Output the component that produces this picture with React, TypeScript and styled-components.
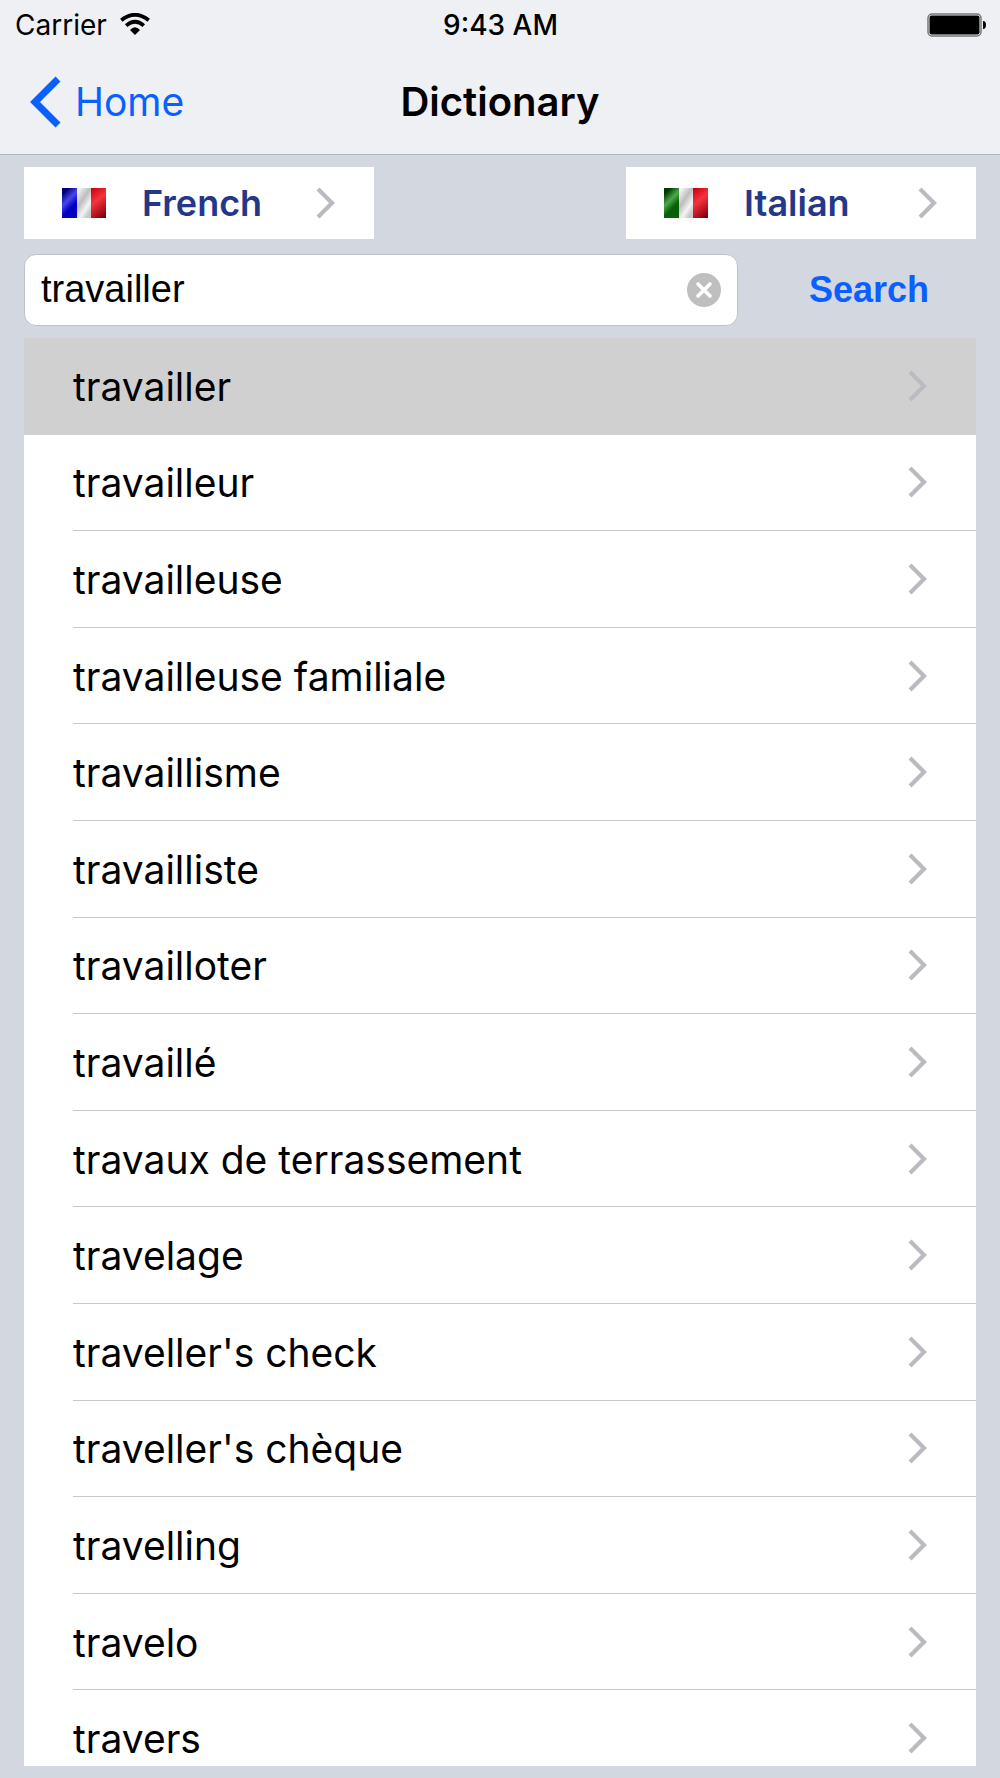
import React, { useState } from "react";
import styled, { createGlobalStyle } from "styled-components";

const GlobalStyle = createGlobalStyle`
  *, *::before, *::after { box-sizing: border-box; }
  body { margin: 0; background: #d2d7e0; }
  button, input { font: inherit; color: inherit; margin: 0; padding: 0; border: 0; background: none; }
  button { cursor: pointer; }
`;

const Screen = styled.div`
  display: flex;
  flex-direction: column;
  height: 100vh;
  padding-bottom: 12px;
  background: #d2d7e0;
  color: #000;
  font-family: Inter, "Liberation Sans", sans-serif;
`;

const Header = styled.header`
  flex: none;
  background: #eff0f4;
  border-bottom: 1px solid #b0b4ba;
`;

const StatusBar = styled.div`
  display: grid;
  grid-template-columns: 1fr auto 1fr;
  align-items: center;
  height: 50px;
  padding: 0 14px 0 15px;
  font-size: 28px;
  line-height: 50px;
`;

const Carrier = styled.span`
  display: flex;
  align-items: center;
  gap: 13px;
`;

const Clock = styled.time`
  font-weight: 500;
`;

const Battery = styled.svg`
  justify-self: end;
`;

const NavBar = styled.nav`
  display: grid;
  grid-template-columns: 1fr auto 1fr;
  align-items: center;
  height: 104px;
  padding: 0 30px;
`;

const BackLink = styled.a`
  display: flex;
  align-items: center;
  gap: 14px;
  color: #0a60ff;
  font-size: 39px;
  line-height: 52px;
  text-decoration: none;
`;

const Title = styled.h1`
  margin: 0;
  font-size: 40px;
  line-height: 52px;
  font-weight: 600;
`;

const Languages = styled.div`
  display: flex;
  justify-content: space-between;
  flex: none;
  padding: 12px 24px 0;
`;

const LanguageButton = styled.button`
  display: grid;
  grid-template-columns: 44px 1fr 20px;
  align-items: center;
  column-gap: 36px;
  width: 35vw;
  height: 72px;
  padding: 0 38px;
  background: #fff;
  color: #253788;
  font-size: 36px;
  font-weight: 600;
  text-align: left;
`;

const SearchForm = styled.form`
  display: grid;
  grid-template-columns: 3fr 1fr;
  flex: none;
  padding: 15px 24px 12px;
  font-family: "Liberation Sans", Arial, sans-serif;
`;

const SearchField = styled.div`
  display: flex;
  align-items: center;
  height: 72px;
  padding: 0 16px;
  background: #fff;
  border: 1px solid #bfc2c8;
  border-radius: 12px;
`;

const SearchInput = styled.input`
  flex: 1;
  min-width: 0;
  padding-bottom: 3px;
  font-size: 38px;
  line-height: 44px;
  outline: none;
`;

const ClearButton = styled.button`
  display: flex;
`;

const SubmitButton = styled.button`
  padding-left: 24px;
  color: #0a60ff;
  font-size: 36px;
  font-weight: 700;
`;

const Results = styled.main`
  flex: 1;
  min-height: 0;
  margin: 0 24px;
  overflow-y: auto;
  scrollbar-width: none;
  background: #fff;
`;

const WordList = styled.ul`
  display: grid;
  grid-auto-rows: 1fr;
  min-height: 1449px;
  margin: 0;
  padding: 0;
  list-style: none;
`;

const WordItem = styled.li<{ $selected: boolean }>`
  display: flex;
  padding-left: 49px;
  background: ${(p) => (p.$selected ? "#d0d0d0" : "#fff")};
`;

const WordButton = styled.button<{ $selected: boolean }>`
  display: flex;
  flex: 1;
  align-items: center;
  justify-content: space-between;
  padding-right: 48px;
  border-bottom: 1px solid ${(p) => (p.$selected ? "#d0d0d0" : "#c8c7cc")};
  font-size: 39px;
  text-align: left;
`;

const WordText = styled.span`
  padding-top: 2px;
  line-height: 52px;
`;

const Chevron = () => (
  <svg width="20" height="32" viewBox="0 0 20 32" fill="none" aria-hidden="true">
    <path d="M2 2 L16 16 L2 30" stroke="#bbbac1" strokeWidth="4.200" />
  </svg>
);

const BackChevron = () => (
  <svg width="31" height="52" viewBox="0 0 31 52" fill="none" aria-hidden="true">
    <path d="M28 3 L5 26 L28 49" stroke="#0a60ff" strokeWidth="7" />
  </svg>
);

const WifiIcon = () => (
  <svg width="30" height="24" viewBox="0 0 30 24" fill="none" aria-hidden="true">
    <path d="M1.300 7.300 Q15 -3.800 28.700 7.300" stroke="#000" strokeWidth="3.800" />
    <path d="M6.200 12.600 Q15 4.800 23.800 12.600" stroke="#000" strokeWidth="3.800" />
    <path d="M10 17 Q15 11.700 20 17 L15 22 Z" fill="#000" />
  </svg>
);

const ClearIcon = () => (
  <svg width="34" height="34" viewBox="0 0 34 34" aria-hidden="true">
    <circle cx="17" cy="17" r="17" fill="#bfbfbf" />
    <path d="M11 11 L23 23 M23 11 L11 23" stroke="#fff" strokeWidth="3.600" strokeLinecap="round" />
  </svg>
);

const Flag = ({ id, stops }: { id: string; stops: [string, string, string] }) => (
  <svg width="44" height="30" viewBox="0 0 44 30" aria-hidden="true">
    <defs>
      <linearGradient id={`${id}-first`} gradientUnits="userSpaceOnUse" x1="0" y1="3" x2="17" y2="20">
        <stop offset="0.1" stopColor={stops[0]} />
        <stop offset="0.45" stopColor={stops[1]} />
        <stop offset="0.75" stopColor={stops[2]} />
      </linearGradient>
      <linearGradient id={`${id}-mid`} gradientUnits="userSpaceOnUse" x1="14" y1="6" x2="32" y2="18">
        <stop offset="0" stopColor="#f2f2f2" />
        <stop offset="0.4" stopColor="#bdbdbd" />
        <stop offset="0.75" stopColor="#f4f4f4" />
        <stop offset="1" stopColor="#c8c8c8" />
      </linearGradient>
      <linearGradient id={`${id}-last`} gradientUnits="userSpaceOnUse" x1="27" y1="3" x2="46" y2="27">
        <stop offset="0" stopColor="#cc0010" />
        <stop offset="0.4" stopColor="#f5353c" />
        <stop offset="0.65" stopColor="#c81c28" />
        <stop offset="1" stopColor="#78000c" />
      </linearGradient>
    </defs>
    <rect width="15" height="30" fill={`url(#${id}-first)`} />
    <rect x="15" width="14" height="30" fill={`url(#${id}-mid)`} />
    <rect x="29" width="15" height="30" fill={`url(#${id}-last)`} />
  </svg>
);

const words = [
  "travailler",
  "travailleur",
  "travailleuse",
  "travailleuse familiale",
  "travaillisme",
  "travailliste",
  "travailloter",
  "travaillé",
  "travaux de terrassement",
  "travelage",
  "traveller's check",
  "traveller's chèque",
  "travelling",
  "travelo",
  "travers",
];

export default function App() {
  const [query, setQuery] = useState("travailler");
  const [selected, setSelected] = useState("travailler");

  return (
    <>
      <GlobalStyle />
      <Screen>
        <Header>
          <StatusBar>
            <Carrier>
              Carrier
              <WifiIcon />
            </Carrier>
            <Clock>9:43 AM</Clock>
            <Battery width="59" height="24" viewBox="0 0 59 24" aria-hidden="true">
              <rect x="1" y="1" width="53" height="22" rx="4" fill="#eff0f4" stroke="#777" strokeWidth="1.500" />
              <rect x="2.500" y="2.500" width="50" height="19" rx="2" fill="#000" />
              <path d="M56 8 Q59 8 59 12 Q59 16 56 16 Z" fill="#000" />
            </Battery>
          </StatusBar>
          <NavBar>
            <BackLink href="#home">
              <BackChevron />
              Home
            </BackLink>
            <Title>Dictionary</Title>
          </NavBar>
        </Header>
        <Languages>
          <LanguageButton type="button">
            <Flag id="french" stops={["#00007c", "#4a46f0", "#0400c0"]} />
            French
            <Chevron />
          </LanguageButton>
          <LanguageButton type="button">
            <Flag id="italian" stops={["#003c00", "#4ea84a", "#086008"]} />
            Italian
            <Chevron />
          </LanguageButton>
        </Languages>
        <SearchForm onSubmit={(e) => e.preventDefault()}>
          <SearchField>
            <SearchInput
              type="text"
              aria-label="Search word"
              value={query}
              onChange={(e) => setQuery(e.target.value)}
            />
            <ClearButton type="button" aria-label="Clear text" onClick={() => setQuery("")}>
              <ClearIcon />
            </ClearButton>
          </SearchField>
          <SubmitButton type="submit">Search</SubmitButton>
        </SearchForm>
        <Results>
          <WordList>
            {words.map((word) => (
              <WordItem key={word} $selected={word === selected}>
                <WordButton type="button" $selected={word === selected} onClick={() => setSelected(word)}>
                  <WordText>{word}</WordText>
                  <Chevron />
                </WordButton>
              </WordItem>
            ))}
          </WordList>
        </Results>
      </Screen>
    </>
  );
}
